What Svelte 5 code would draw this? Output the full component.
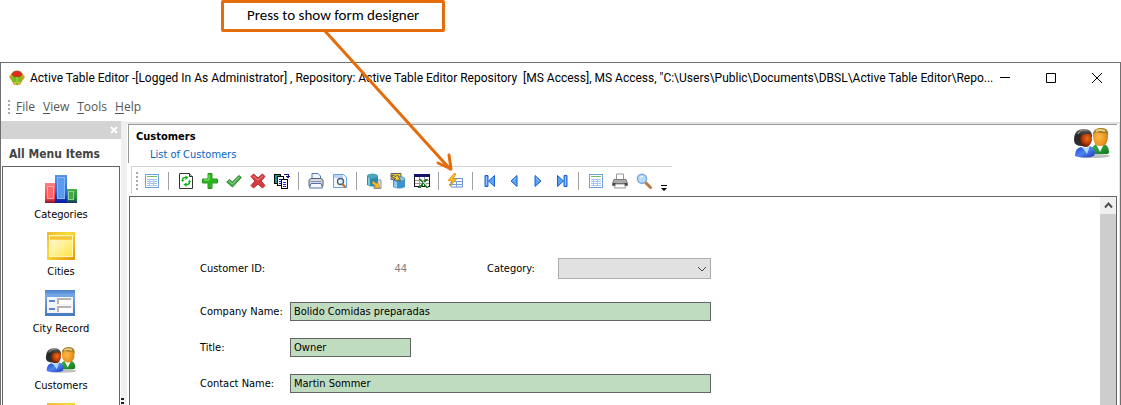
<script>
  const menu = ['File', 'View', 'Tools', 'Help'];

  const sideItems = [
    { icon: 'chart', label: 'Categories' },
    { icon: 'calendar', label: 'Cities' },
    { icon: 'record', label: 'City Record' },
    { icon: 'people', label: 'Customers' }
  ];

  const toolGroups = [
    ['table'],
    ['refresh', 'add', 'check', 'delete', 'copy'],
    ['print', 'preview'],
    ['import', 'export', 'excel'],
    ['designer'],
    ['first', 'prev', 'next', 'last'],
    ['table', 'printer', 'find']
  ];

  let company = $state('Bolido Comidas preparadas');
  let title = $state('Owner');
  let contact = $state('Martin Sommer');
</script>

{#snippet people()}
  <svg class="people" viewBox="0 0 38 32" aria-hidden="true">
    <defs>
      <radialGradient id="skinDark" cx=".6" cy=".35" r=".7"><stop offset="0" stop-color="#ee6d1c" /><stop offset=".55" stop-color="#b43c08" /><stop offset="1" stop-color="#4c1200" /></radialGradient>
      <radialGradient id="skinLight" cx=".4" cy=".5" r=".7"><stop offset="0" stop-color="#ffb84e" /><stop offset=".6" stop-color="#ee951f" /><stop offset="1" stop-color="#b87210" /></radialGradient>
      <linearGradient id="blueCoat" x2="1" y2="1"><stop offset="0" stop-color="#203fc8" /><stop offset=".5" stop-color="#4d83f2" /><stop offset="1" stop-color="#1b36b8" /></linearGradient>
      <linearGradient id="greenCoat" x2="1" y2="1"><stop offset="0" stop-color="#45b54b" /><stop offset="1" stop-color="#12791c" /></linearGradient>
      <linearGradient id="hair" y2="1" x2="0"><stop offset="0" stop-color="#666" /><stop offset=".4" stop-color="#242424" /><stop offset="1" stop-color="#333" /></linearGradient>
    </defs>
    <ellipse cx="20" cy="29" rx="17" ry="2" fill="#000" opacity=".25" />
    <path d="M18 27q0-8 5-10l4 5 4-5q5 2 5 8 0 2-3 2z" fill="url(#greenCoat)" />
    <path d="M23 17l4 8 4-8z" fill="#f4fff5" />
    <path d="M20 9q0-8 8-8t7 8q0 10-7 10-8 0-8-10z" fill="url(#skinLight)" />
    <path d="M20 8q0-7 8-7t7 7l-2-2q-5 1-10-1z" fill="#a3802f" />
    <path d="M23 4q4-2 9 0" stroke="#e9cb79" stroke-width="2" fill="none" />
    <path d="M1 13Q1 2 11 2q8 0 8 7l-3 8q-3 3-7 2-8 0-8-6z" fill="url(#hair)" />
    <path d="M7 10q1-3 6-3h5l1 6q-2 7-6 7-6 0-6-10z" fill="url(#skinDark)" />
    <path d="M5 7q2-5 9-4" stroke="#a5a5a5" stroke-width="1" fill="none" />
    <path d="M2 29q0-8 6-9l4 2 5-3q5 2 5 7l-1 3q-9 3-19 0z" fill="url(#blueCoat)" />
    <path d="M9 20l5 7 3-8-3 2z" fill="#a9dcff" />
  </svg>
{/snippet}

{#snippet sideIcon(name)}
  {#if name === 'people'}
    {@render people()}
  {:else}
    <svg width="32" height="32" viewBox="0 0 32 32" aria-hidden="true">
      {#if name === 'chart'}
        <defs>
          <linearGradient id="cr" y2="1" x2="0"><stop offset="0" stop-color="#ff8080" /><stop offset=".8" stop-color="#f33b42" /><stop offset="1" stop-color="#7d1430" /></linearGradient>
          <linearGradient id="cb" y2="1" x2="0"><stop offset="0" stop-color="#5794e6" /><stop offset=".6" stop-color="#2d67db" /><stop offset="1" stop-color="#0718a3" /></linearGradient>
          <linearGradient id="cg" y2="1" x2="0"><stop offset="0" stop-color="#48b448" /><stop offset=".7" stop-color="#248739" /><stop offset="1" stop-color="#122f65" /></linearGradient>
        </defs>
        <rect x="0" y="10" width="10" height="20" fill="url(#cr)" />
        <rect x="2.500" y="13.500" width="6" height="12" fill="#ff6868" stroke="#ffb0ae" />
        <rect x="21" y="16" width="11" height="14" fill="url(#cg)" />
        <rect x="23.500" y="18.500" width="5" height="8" fill="#43a94c" stroke="#8bd58b" />
        <rect x="10" y="2" width="12" height="28" fill="url(#cb)" />
        <rect x="12.500" y="4.500" width="7" height="21" fill="#5c9aec" stroke="#86b8f8" />
      {:else if name === 'calendar'}
        <defs>
          <linearGradient id="ye" x2="1" y2="1"><stop offset="0" stop-color="#edb832" /><stop offset=".4" stop-color="#f7dc37" /><stop offset="1" stop-color="#e9950b" /></linearGradient>
          <linearGradient id="yf" x2="1" y2="1"><stop offset="0" stop-color="#fff7d8" /><stop offset=".5" stop-color="#fff19a" /><stop offset="1" stop-color="#ffe53a" /></linearGradient>
        </defs>
        <rect x="2" y="2" width="28" height="28" fill="url(#ye)" />
        <rect x="4.500" y="5.500" width="23" height="21" fill="url(#yf)" stroke="#fff4b3" />
        <rect x="5" y="6" width="22" height="4" fill="#f8d248" />
        <path d="M5 8h22" stroke="#f5b532" />
      {:else}
        <defs><linearGradient id="rb" y2="1" x2="0"><stop offset="0" stop-color="#4a7fcb" /><stop offset=".2" stop-color="#76a9e8" /><stop offset="1" stop-color="#4679bd" /></linearGradient></defs>
        <rect x="0" y="3" width="30" height="26" fill="url(#rb)" />
        <rect x="2" y="10" width="26" height="16" fill="#f4f4f4" />
        <path d="M4 14h6M4 22h6" stroke="#5c86d8" stroke-width="2" />
        <path d="M13 17v-5h13M13 25v-5h13" stroke="#b5b5b5" stroke-width="2" fill="none" />
        <path d="M14 13h13v4H14zM14 21h13v4H14z" fill="#fff" />
      {/if}
    </svg>
  {/if}
{/snippet}

{#snippet toolIcon(name)}
  <svg width="16" height="16" viewBox="0 0 16 16" aria-hidden="true" shape-rendering={['table', 'copy', 'excel'].includes(name) ? 'crispEdges' : 'auto'}>
    {#if name === 'table'}
      <path d="M1.500 1.500h13v13h-13z" fill="#fff" stroke="#6ea3e0" />
      <path d="M3 3.500h10" stroke="#76bb66" />
      <path d="M3 6.500h10M3 8.500h10M3 10.500h10M3 12.500h10M5.500 6v7M9.500 6v7" stroke="#a9c7ec" fill="none" />
    {:else if name === 'refresh'}
      <path d="M1.500.500h10l3 3v12h-13z" fill="#fff" stroke="#333" />
      <path d="M11.500.500v3h3" fill="#ccc" stroke="#333" />
      <path d="M4.500 7q0-3 4-2.500M11.500 9q0 3-4 2.500" fill="none" stroke="#13b31c" stroke-width="1.600" />
      <path d="M7.500 2.500l3 2-3 2.500zM8.500 9.500l-3 2 3 2.500zM3 7h3.500L4.500 9zM10 9h3l-1.500-2.500z" fill="#13b31c" />
    {:else if name === 'add'}
      <path d="M6 .500h4V6h5.500v4H10v5.500H6V10H.500V6H6z" fill="#29b81c" stroke="#2a9620" />
      <path d="M7 2v5H2" stroke="#8be67c" fill="none" />
    {:else if name === 'check'}
      <path d="M.700 9l2.800-2.500L6.500 9 12.800 2.500l2.500 2L6.500 14z" fill="#4cae4b" stroke="#2b8331" />
      <path d="M3 8l3.500 3L13 4" fill="none" stroke="#8fd486" />
    {:else if name === 'delete'}
      <path d="M1 3.500L3.500 1 8 5l4.500-4L15 3.500 11 8l4 4.500-2.500 2.500L8 11l-4.500 4L1 12.500 5 8z" fill="#d93b3c" stroke="#b32c30" />
      <path d="M3 3l5 4 5-4" fill="none" stroke="#f08a86" />
    {:else if name === 'copy'}
      <path d="M.500 1.500h6v9h-6z" fill="#179c9c" stroke="#000" />
      <path d="M3.500 3.500h6v9h-6z" fill="#fff" stroke="#000" />
      <path d="M5 6h3M5 8h3M5 10h3" stroke="#1414b8" />
      <path d="M7.500 6.500h6v9h-6z" fill="#fff" stroke="#000" />
      <path d="M9 9h3M9 11h3M9 13h3" stroke="#2323e0" />
      <path d="M10 1.500h4v3M12 3.500h4M13 4.500h2" stroke="#16168f" fill="none" />
    {:else if name === 'print'}
      <path d="M4 7V.500h6l2.500 2.500V7" fill="#eef5ff" stroke="#4f79b5" />
      <path d="M1 7l2-1.500h10L15 7v6H1z" fill="#d3d9e5" stroke="#596274" />
      <path d="M3 10.500h10l1.500 4.500H1.500z" fill="#f5f8ff" stroke="#5574a8" />
      <path d="M2.500 8.500h11" stroke="#8990a0" />
    {:else if name === 'preview'}
      <path d="M1.500 1.500h10l3 3v10h-13z" fill="#eff6ff" stroke="#6da5df" />
      <path d="M2 2h9v3H2z" fill="#b8d7f7" />
      <circle cx="8.500" cy="8.500" r="3" fill="#d9f3ff" stroke="#525a68" stroke-width="1.300" />
      <path d="M10.500 11l3 3.500" stroke="#ba7229" stroke-width="2" />
    {:else if name === 'import'}
      <path d="M8 7h7v8.500H8z" fill="#dde6ee" stroke="#8993a0" />
      <path d="M1 3v9q5 3 11 0V3z" fill="#2b8ca8" />
      <path d="M2 4v8l2 1V5z" fill="#7ec8e0" />
      <ellipse cx="6.500" cy="3" rx="5.500" ry="2.500" fill="#4fa3bd" />
      <path d="M7 8l3.500 2.500L12 9l2 6-6-.500 1.500-1.500L6 10z" fill="#f9bd24" stroke="#b97e11" stroke-width=".6" />
    {:else if name === 'export'}
      <path d="M1 .500h10v6H1z" fill="#f2c33d" stroke="#55606d" />
      <path d="M3 6v8q6 3 12 0V6z" fill="#3f93cc" />
      <path d="M4 7v7l3 1V8z" fill="#8ccdf2" />
      <ellipse cx="9" cy="6" rx="6" ry="2.500" fill="#8fc0dd" stroke="#2a7895" stroke-width=".6" />
      <path d="M2 2l4 1.500L7.500 2l3 5.500L4 7l1.500-1.500L2 4z" fill="#ffd02c" stroke="#3b4148" stroke-width=".8" />
    {:else if name === 'excel'}
      <path d="M.500 1.500h15v12H.500z" fill="#fff" stroke="#111" />
      <path d="M0 1h16v3H0z" fill="#15156e" />
      <path d="M1 7.500h14M1 10.500h14M5.500 4v9M10.500 4v9" stroke="#999" />
      <path d="M6 6l8 9M13 6l-8 9" stroke="#24762b" stroke-width="2" />
      <path d="M7 6l8 9" stroke="#b2dcae" />
    {:else if name === 'designer'}
      <path d="M5 5.500h9.500V14H3V9" fill="#fff" stroke="#6490cb" />
      <path d="M3 8.500h12M1 11.500h14M8.500 9v5" stroke="#75a0d6" />
      <path d="M6.500 0L0 7.500l4 .5-2 5 6.500-7L5 5.500 8 1z" fill="#ffbd26" stroke="#d98a0c" stroke-width=".8" />
    {:else if name === 'first' || name === 'last'}
      <g transform={name === 'last' ? 'matrix(-1 0 0 1 16 0)' : undefined}>
        <path d="M3 2.500h3v11H3zM12.500 2.500v11L6.500 8z" fill="#5ba3f5" stroke="#1c5fd0" />
        <path d="M4.500 4v8" stroke="#9bcbff" />
      </g>
    {:else if name === 'prev' || name === 'next'}
      <g transform={name === 'next' ? 'matrix(-1 0 0 1 16 0)' : undefined}>
        <path d="M11 2.500v11L5 8z" fill="#5ba3f5" stroke="#1c5fd0" />
        <path d="M10 5L7 8" stroke="#9bcbff" />
      </g>
    {:else if name === 'printer'}
      <path d="M4.500 6V1h7v5" fill="#fff" stroke="#999" />
      <path d="M2 6.500h12l1.500 4v2H.500v-2z" fill="#aaa" stroke="#777" />
      <path d="M1 10h14v2.500H1z" fill="#444" />
      <path d="M3.500 11h9l1 4h-11z" fill="#fafafa" stroke="#999" />
    {:else}
      <path d="M9.500 9.500l5 5" stroke="#ba793f" stroke-width="3" stroke-linecap="round" />
      <circle cx="6" cy="5.800" r="4.500" fill="#b5dcfb" stroke="#83aadd" stroke-width="1.500" />
      <path d="M4 5q1-2 3-1.500" stroke="#fff" fill="none" />
    {/if}
  </svg>
{/snippet}

<div class="page">
  <div class="callout">Press to show form designer</div>
  <svg class="arrow" width="240" height="180" viewBox="0 0 240 180" aria-hidden="true">
    <path d="M104 31l125 138M217 163l13 6-2-14" fill="none" stroke="#e46c0a" stroke-width="3" stroke-linejoin="round" stroke-linecap="round" />
  </svg>

  <main class="window">
    <header class="titlebar">
      <svg width="16" height="16" viewBox="0 0 16 16" aria-hidden="true">
        <path d="M3 3h10l3 4-2 3-1 1-2 4H5l-2-4-1-1-2-3z" fill="#d99a20" />
        <path d="M3 6h10v5l-2 3H9l-1 2-1-2H5l-2-3z" fill="#79bc28" />
        <path d="M5 12h2v3H5zM9 12h2v3H9z" fill="#e9b52c" />
        <ellipse cx="8" cy="4" rx="5" ry="3" fill="#df2a20" stroke="#8c5a18" stroke-width=".8" />
        <path d="M8 7v6" stroke="#b5d545" />
      </svg>
      <h1>Active Table Editor -[Logged In As Administrator] , Repository: Active Table Editor Repository&nbsp; [MS Access], MS Access, "C:\Users\Public\Documents\DBSL\Active Table Editor\Repo...</h1>
      <div class="controls">
        <button aria-label="Minimize"><svg width="12" height="12"><path d="M1 5.500h10" stroke="#000" /></svg></button>
        <button aria-label="Maximize"><svg width="12" height="12"><path d="M1.500 1.500h9v9h-9z" fill="none" stroke="#000" /></svg></button>
        <button aria-label="Close"><svg width="12" height="12"><path d="M1 1l10 10M11 1L1 11" stroke="#000" /></svg></button>
      </div>
    </header>

    <nav class="menubar">
      <span class="grip"></span>
      {#each menu as item}
        <button><u>{item[0]}</u>{item.slice(1)}</button>
      {/each}
    </nav>

    <div class="body">
      <aside>
        <div class="side-top">
          <button aria-label="Close menu"><svg width="8" height="8"><path d="M1 1l6 6M7 1L1 7" stroke="#fff" stroke-width="2" /></svg></button>
        </div>
        <h2>All Menu Items</h2>
        <div class="side-list">
          {#each sideItems as item}
            <button class="side-item">{@render sideIcon(item.icon)}<span>{item.label}</span></button>
          {/each}
          <div class="side-item">{@render sideIcon('calendar')}</div>
        </div>
      </aside>
      <div class="splitter"><span></span></div>

      <section class="content">
        <div class="heading">
          <div>
            <h2>Customers</h2>
            <a href="#list">List of Customers</a>
          </div>
          {@render people()}
        </div>

        <div class="toolbar" role="toolbar">
          <span class="grip tall"></span>
          {#each toolGroups as group, i}
            {#if i > 0}<span class="sep"></span>{/if}
            {#each group as name}
              <button aria-label={name}>{@render toolIcon(name)}</button>
            {/each}
          {/each}
          <button class="more" aria-label="More"><svg width="8" height="8"><path d="M1 1.500h6" stroke="#000" /><path d="M1 4h6L4 7z" /></svg></button>
        </div>

        <div class="panel">
          <form>
            <div class="row first">
              <span class="caption">Customer ID:</span>
              <output>44</output>
              <label for="category">Category:</label>
              <div class="select">
                <select id="category"><option></option></select>
                <svg width="10" height="6" viewBox="0 0 10 6" aria-hidden="true"><path d="M1 1l4 4 4-4" fill="none" stroke="#444" /></svg>
              </div>
            </div>
            <div class="row">
              <label for="company">Company Name:</label>
              <input id="company" bind:value={company} />
            </div>
            <div class="row">
              <label for="title">Title:</label>
              <input id="title" class="short" bind:value={title} />
            </div>
            <div class="row">
              <label for="contact">Contact Name:</label>
              <input id="contact" bind:value={contact} />
            </div>
          </form>
          <div class="scrollbar">
            <button aria-label="Scroll up"><svg width="9" height="7"><path d="M1 5.500l3.500-4 3.500 4" fill="none" stroke="#505050" stroke-width="2" /></svg></button>
            <span></span>
          </div>
        </div>
      </section>
    </div>
  </main>
</div>

<style>
  :global(body) {
    background: #fff;
  }
  * {
    box-sizing: border-box;
  }
  svg {
    display: block;
    flex: none;
  }
  h1,
  h2 {
    margin: 0;
  }
  button {
    padding: 0;
    border: 0;
    background: none;
    font: inherit;
    color: inherit;
  }
  .page {
    position: relative;
    display: flex;
    flex-direction: column;
    height: 100vh;
    padding-top: 62px;
    overflow: hidden;
    font: 11px/14px Tahoma, "DejaVu Sans Condensed", "DejaVu Sans", sans-serif;
    color: #000;
  }
  .callout {
    position: absolute;
    z-index: 2;
    top: 0;
    left: 221px;
    padding: 3px 23px 5px;
    border: 3px solid #e46c0a;
    border-radius: 2px;
    background: #fff;
    font: 15px/18px Calibri, Carlito, Lato, sans-serif;
    white-space: nowrap;
  }
  .arrow {
    position: absolute;
    z-index: 1;
    top: 0;
    left: 221px;
    pointer-events: none;
  }
  .window {
    flex: 1;
    min-height: 0;
    display: flex;
    flex-direction: column;
    border: 1px solid #707070;
    border-bottom: 0;
  }
  .titlebar {
    display: flex;
    align-items: center;
    height: 29px;
    padding-left: 8px;
  }
  h1 {
    flex: 1;
    min-width: 0;
    margin-left: 5px;
    font: 12px/18px "Segoe UI", Roboto, sans-serif;
    white-space: nowrap;
  }
  .controls {
    display: flex;
  }
  .controls button {
    display: grid;
    place-items: center;
    width: 46px;
    height: 29px;
  }
  .controls button:first-child {
    width: 40px;
    padding-right: 6px;
  }
  .menubar {
    display: flex;
    align-items: center;
    gap: 8px;
    height: 29px;
    padding-left: 7px;
    font: 12px/16px "Segoe UI", "Open Sans", sans-serif;
    color: #555;
  }
  .menubar u {
    text-underline-offset: 2px;
  }
  .grip {
    width: 2px;
    height: 14px;
    background: repeating-linear-gradient(#aaa 0 2px, transparent 2px 4px);
  }
  .grip.tall {
    height: 18px;
    margin-right: 2px;
  }
  .menubar .grip {
    margin-right: -2px;
  }
  .body {
    flex: 1;
    min-height: 0;
    display: flex;
  }
  aside {
    display: flex;
    flex-direction: column;
    width: 120px;
  }
  .side-top {
    display: flex;
    flex: none;
    justify-content: flex-end;
    align-items: center;
    height: 18px;
    padding-right: 3px;
    background: #d3d3d3;
  }
  aside h2 {
    flex: none;
    height: 27px;
    padding-left: 8px;
    font: bold 12px/30px Tahoma, "DejaVu Sans Condensed", sans-serif;
    color: #444;
    white-space: nowrap;
  }
  .side-list {
    flex: 1;
    min-height: 0;
    display: flex;
    flex-direction: column;
    margin: 0 1px;
    padding-top: 6px;
    border: 1px solid #646464;
    border-bottom: 0;
    overflow: hidden;
  }
  .side-item {
    flex: none;
    display: flex;
    flex-direction: column;
    align-items: center;
    gap: 3px;
    height: 57px;
  }
  .people {
    width: 38px;
    height: 32px;
  }
  .side-item .people {
    width: 32px;
    height: 32px;
  }
  .splitter {
    flex: none;
    display: flex;
    align-items: flex-end;
    width: 6px;
    background: #f0f0f0;
  }
  .splitter span {
    width: 3px;
    height: 7px;
    background: repeating-linear-gradient(#222 0 2px, transparent 2px 4px);
  }
  .content {
    flex: 1;
    min-width: 0;
    display: flex;
    flex-direction: column;
    margin-top: 1px;
    padding-right: 2px;
    border-top: 2px solid #e3e3e3;
    border-right: 1px solid #e3e3e3;
  }
  .heading {
    display: flex;
    flex: none;
    justify-content: space-between;
    align-items: flex-start;
    height: 39px;
    margin-left: 1px;
    padding: 4px 6px 0 7px;
    border: 1px solid #999;
    border-width: 1px 0 0 1px;
  }
  .heading h2 {
    font: bold 11px/16px Tahoma, "DejaVu Sans Condensed", sans-serif;
  }
  .heading a {
    display: block;
    margin: 2px 0 0 14px;
    line-height: 16px;
    color: #0563c1;
    text-decoration: none;
  }
  .heading .people {
    margin-top: -2px;
  }
  .toolbar {
    display: flex;
    flex: none;
    align-items: center;
    align-self: flex-start;
    height: 28px;
    margin: 3px 0 2px 4px;
    padding-left: 4px;
    border: 1px solid #d3d3d3;
    border-width: 1px 0 0 1px;
  }
  .toolbar button {
    display: grid;
    place-items: center;
    width: 24px;
    height: 26px;
  }
  .toolbar .more {
    width: 16px;
    align-items: end;
    padding-bottom: 2px;
  }
  .sep {
    width: 2px;
    height: 18px;
    margin: 0 4px;
    border-left: 1px solid #a0a0a0;
  }
  .panel {
    flex: 1;
    min-height: 0;
    display: flex;
    justify-content: space-between;
    margin-left: 2px;
    border: 1px solid #646464;
    border-bottom: 0;
    overflow: hidden;
  }
  form {
    display: flex;
    flex: 0 1 581px;
    flex-direction: column;
    gap: 17px;
    padding: 61px 0 0 70px;
  }
  .row {
    display: grid;
    grid-template-columns: 90px 1fr;
    align-items: center;
  }
  .row.first {
    grid-template-columns: 90px 1fr 71px 153px;
    margin-bottom: 6px;
  }
  output {
    padding-right: 80px;
    color: #808080;
    text-align: right;
  }
  label,
  .caption {
    white-space: nowrap;
  }
  input {
    width: 100%;
    height: 19px;
    padding: 0 3px;
    border: 1px solid #646464;
    border-radius: 0;
    background: #c0dcc0;
    font: inherit;
    color: #000;
  }
  input.short {
    width: 121px;
  }
  .select {
    display: grid;
    align-items: center;
  }
  .select > * {
    grid-area: 1 / 1;
  }
  .select svg {
    justify-self: end;
    margin-right: 4px;
    pointer-events: none;
  }
  select {
    appearance: none;
    width: 100%;
    height: 21px;
    border: 1px solid #adadad;
    border-radius: 0;
    background: #e1e1e1;
    font: inherit;
  }
  .scrollbar {
    display: flex;
    flex-direction: column;
    width: 16px;
    background: #f0f0f0;
  }
  .scrollbar button {
    display: grid;
    place-items: center;
    height: 17px;
  }
  .scrollbar span {
    flex: 1;
    background: #cdcdcd;
  }
</style>
